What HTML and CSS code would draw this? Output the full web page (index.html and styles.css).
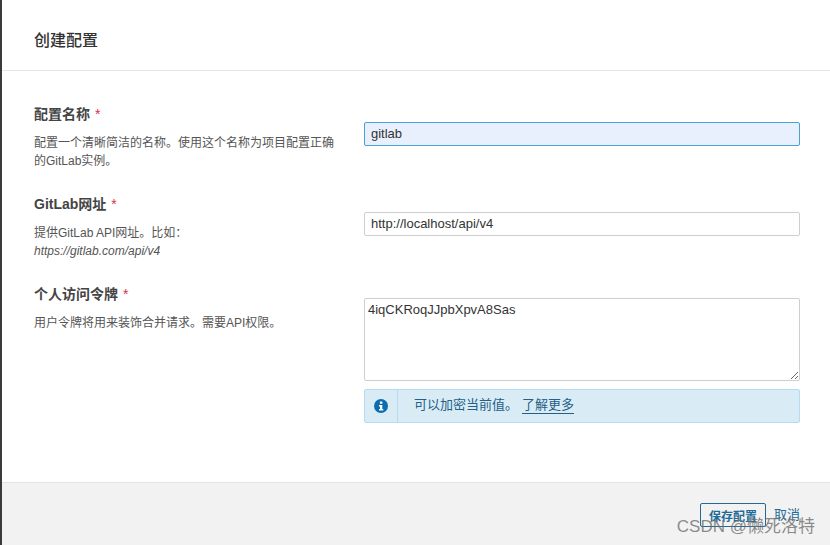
FILE: index.html
```html
<!DOCTYPE html>
<html lang="zh">
<head>
<meta charset="utf-8">
<title>创建配置</title>
<link rel="stylesheet" href="styles.css">
</head>
<body>
<div class="page">
  <header class="head"><h1 class="title">创建配置</h1></header>
  <main class="form">
    <div class="row row-name">
      <div class="info">
        <div class="label">配置名称<span class="req">*</span></div>
        <p class="desc">配置一个清晰简洁的名称。使用这个名称为项目配置正确的GitLab实例。</p>
      </div>
      <div class="field"><input class="input input-auto" type="text" value="gitlab"></div>
    </div>
    <div class="row row-url">
      <div class="info">
        <div class="label">GitLab网址<span class="req">*</span></div>
        <p class="desc">提供GitLab API网址。比如：<br><em>https://gitlab.com/api/v4</em></p>
      </div>
      <div class="field"><input class="input" type="text" value="http://localhost/api/v4"></div>
    </div>
    <div class="row">
      <div class="info">
        <div class="label">个人访问令牌<span class="req">*</span></div>
        <p class="desc">用户令牌将用来装饰合并请求。需要API权限。</p>
      </div>
      <div class="field">
        <textarea class="area">4iqCKRoqJJpbXpvA8Sas</textarea>
        <div class="note">
          <div class="note-icon">
            <svg width="14" height="14" viewBox="0 0 14 14"><circle cx="7" cy="7" r="7" fill="#0b6cb0"/><rect x="5.9" y="2.4" width="2.5" height="2.3" rx=".5" fill="#fff"/><path d="M5 5.9h3.3v4.2h1v1.5H5v-1.5h1V7.4H5z" fill="#fff"/></svg>
          </div>
          <div class="note-text">可以加密当前值。<a class="note-link" href="#">了解更多</a></div>
        </div>
      </div>
    </div>
  </main>
  <footer class="foot">
    <button class="save" type="button">保存配置</button>
    <a class="cancel" href="#">取消</a>
  </footer>
  <div class="mark">CSDN @懒死洛特</div>
</div>
</body>
</html>
```
FILE: styles.css
```css
* { box-sizing: border-box; }
html, body { margin: 0; height: 100%; overflow: hidden; }
body {
  background: #fff;
  color: #333;
  font-family: "Liberation Sans", "Noto Sans CJK SC", sans-serif;
  font-size: 12px;
}
.page {
  position: relative;
  width: 830px;
  height: 545px;
  border-left: 2px solid #3a3a3a;
  display: flex;
  flex-direction: column;
}
.head {
  height: 71px;
  border-bottom: 1px solid #e6e6e6;
  padding: 30px 0 0 32px;
}
.title {
  margin: 0;
  font-size: 16px;
  line-height: 22px;
  font-weight: 500;
  color: #333;
}
.form {
  flex: 1;
  padding: 34px 30px 0 32px;
}
.row {
  display: grid;
  grid-template-columns: 300px 436px;
  column-gap: 30px;
}
.row-name { height: 90px; }
.row-url { height: 90px; }
.label {
  font-size: 14px;
  line-height: 18px;
  font-weight: 700;
  color: #444;
}
.req {
  color: #d4333f;
  font-weight: 400;
  margin-left: 5px;
}
.desc {
  margin: 11px 0 0;
  font-size: 12px;
  line-height: 18px;
  color: #555;
}
.desc em { color: #555; }
.field { padding-top: 17px; }
.row:nth-child(3) .field { padding-top: 13px; }
.input {
  display: block;
  width: 100%;
  height: 24px;
  padding: 0 6px 2px;
  border: 1px solid #cfcfcf;
  border-radius: 2px;
  background: #fff;
  color: #333;
  font: 13px "Liberation Sans", sans-serif;
  outline: none;
}
.input-auto {
  background: #e8f0fe;
  border-color: #4b9fd5;
}
.area {
  display: block;
  width: 100%;
  height: 83px;
  padding: 3px;
  border: 1px solid #cfcfcf;
  border-radius: 2px;
  color: #333;
  font: 13px/16px "Liberation Sans", sans-serif;
  outline: none;
  resize: both;
}
.note {
  display: flex;
  margin-top: 8px;
  height: 34px;
  background: #d9ecf6;
  border: 1px solid #b3dcf2;
  border-radius: 2px;
  color: #235f86;
  font-size: 13px;
}
.note-icon {
  width: 33px;
  border-right: 1px solid #b3dcf2;
  display: flex;
  align-items: center;
  justify-content: center;
}
.note-text {
  padding: 6px 0 0 16px;
  line-height: 18px;
}
.note-link {
  color: #235f86;
  margin-left: 4px;
  text-decoration: none;
  border-bottom: 1px solid #235f86;
  display: inline-block;
  line-height: 17px;
}
.foot {
  height: 63px;
  background: #f2f2f2;
  border-top: 1px solid #e4e4e4;
  display: flex;
  align-items: flex-start;
  justify-content: flex-end;
  padding: 20px 30px 0 0;
  gap: 8px;
}
.save {
  width: 66px;
  height: 24px;
  padding: 0;
  background: transparent;
  border: 1px solid #236a97;
  border-radius: 2px;
  color: #236a97;
  font: 700 12px "Liberation Sans", "Noto Sans CJK SC", sans-serif;
}
.cancel {
  color: #236a97;
  font-size: 13px;
  line-height: 24px;
  text-decoration: none;
}
.mark {
  position: absolute;
  right: 15px;
  bottom: 7px;
  color: rgba(110, 110, 110, .8);
  font-size: 17px;
  line-height: 22px;
  white-space: nowrap;
}
```
